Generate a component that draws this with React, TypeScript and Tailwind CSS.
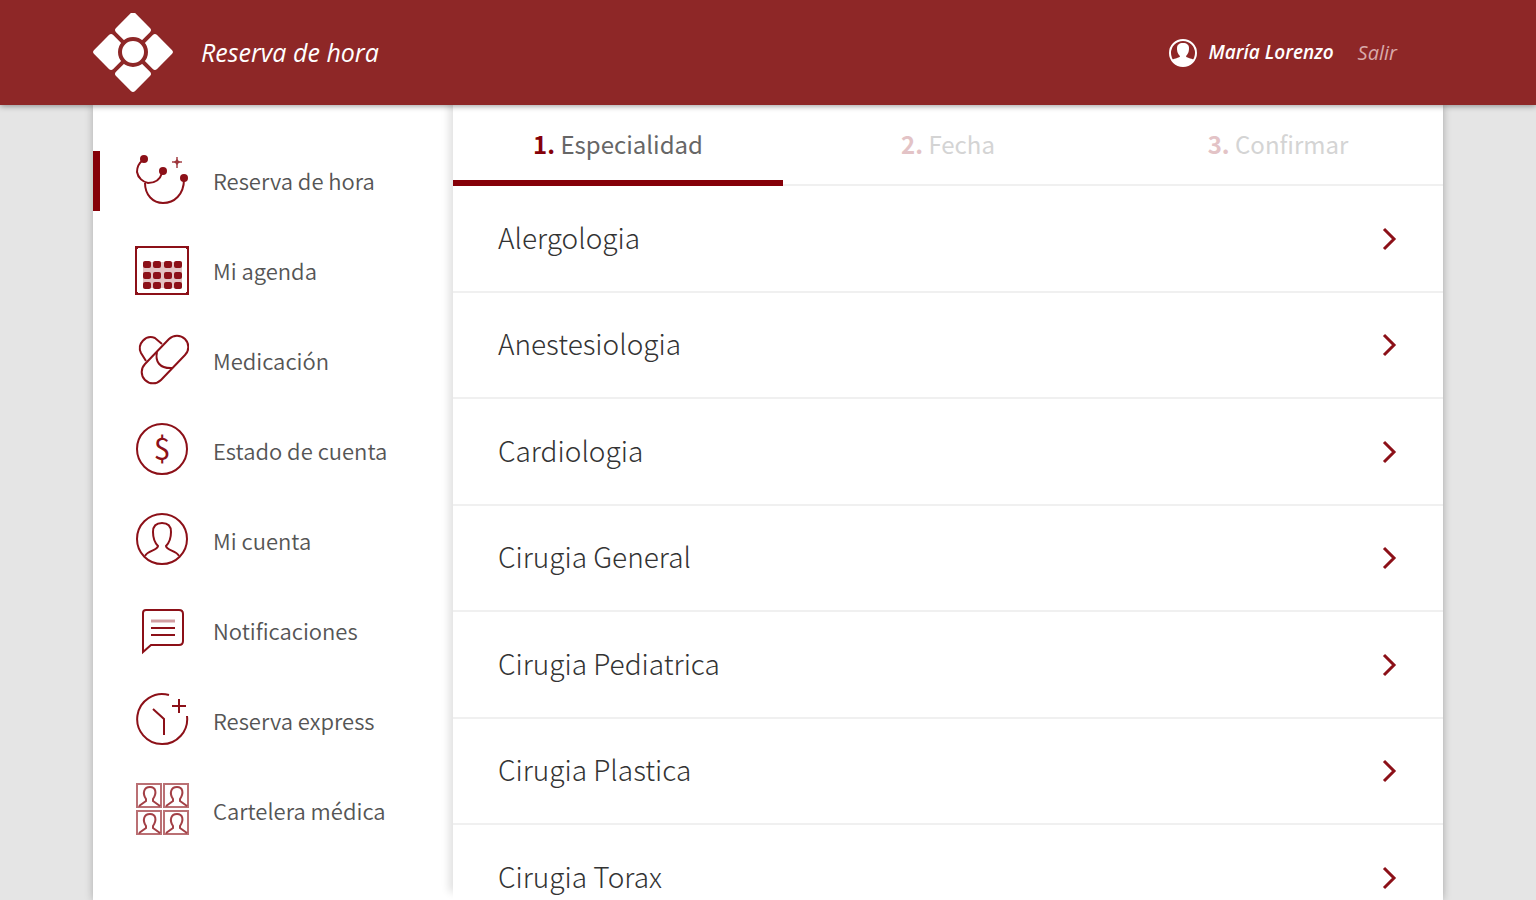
import { useState, type ReactNode } from 'react';
import { clsx } from 'clsx';

const Stethoscope = () => (
  <>
    <path d="M8 9C4 12 2 16 2 21C3 27 8 31 13 32C20 32 25 29 27 22" />
    <path d="M10 32C10 44 18 52 28 52C39 52 49 44 49 28" />
    <g fill="currentColor" stroke="none">
      <circle cx="9" cy="8" r="4" />
      <circle cx="28" cy="20" r="4" />
      <circle cx="49" cy="27" r="4" />
    </g>
    <path d="M42 6V17M37 11H47" strokeOpacity="0.6" />
    <path d="M42 8L45 11L42 14L39 11Z" fill="currentColor" stroke="none" opacity="0.6" />
  </>
);

const Calendar = () => (
  <>
    <rect x="1" y="6" width="52" height="47" />
    <rect x="8" y="21" width="39" height="26" fill="#e3c3c3" stroke="none" />
    <g fill="currentColor" stroke="none">
      {[20, 31, 41].map((y) =>
        [8, 18, 29, 39].map((x) => (
          <rect key={`${x}-${y}`} x={x} y={y} width="8" height="7" rx="2" />
        ))
      )}
      {[5, 51].map((y) =>
        [0, 51].map((x) => <rect key={`${x}-${y}`} x={x} y={y} width="3" height="3" />)
      )}
    </g>
  </>
);

const Pills = () => (
  <>
    <path d="M11 30L6 22A11 11 0 0 1 20 7L27 13" />
    <path d="M34 8A11 11 0 0 1 50 24L26 49A11 11 0 0 1 10 33Z" />
    <path d="M22 21C20 30 24 38 38 37" />
  </>
);

const Dollar = () => (
  <>
    <circle cx="27" cy="28" r="25" />
    <text
      x="27"
      y="39"
      textAnchor="middle"
      fill="currentColor"
      stroke="none"
      className="text-[30px] font-normal"
    >
      $
    </text>
  </>
);

const Person = () => (
  <>
    <circle cx="27" cy="28" r="25" />
    <path d="M10 45C13 39 22 40 23 35C19 31 18 27 18 21C18 15 21 12 27 12C33 12 36 15 36 21C36 27 35 31 31 35C32 40 41 39 44 45" />
  </>
);

const Message = () => (
  <>
    <path d="M8 51V12Q8 9 11 9H44Q48 9 48 13V40Q48 44 44 44H16Z" />
    <path d="M16 20H40" strokeWidth="3" strokeOpacity="0.4" />
    <path d="M16 27H40M16 34H40" />
  </>
);

const Clock = () => (
  <>
    <path d="M34 4A25 25 0 1 0 52 25" />
    <path d="M18 18L29 28V44M44 8V22M37 15H51" />
  </>
);

const Board = () => (
  <>
    {[3, 30].map((y) =>
      [2, 29].map((x) => (
        <g key={`${x}-${y}`} transform={`translate(${x} ${y})`}>
          <rect width="24" height="23" strokeOpacity="0.6" />
          <path d="M2 22L9 17V15C5 9 7 3 13 3C19 3 20 9 16 15V17L23 22" strokeOpacity="0.8" />
        </g>
      ))
    )}
  </>
);

const menu: { name: string; icon: () => ReactNode }[] = [
  { name: 'Reserva de hora', icon: Stethoscope },
  { name: 'Mi agenda', icon: Calendar },
  { name: 'Medicación', icon: Pills },
  { name: 'Estado de cuenta', icon: Dollar },
  { name: 'Mi cuenta', icon: Person },
  { name: 'Notificaciones', icon: Message },
  { name: 'Reserva express', icon: Clock },
  { name: 'Cartelera médica', icon: Board },
];

const steps = ['Especialidad', 'Fecha', 'Confirmar'];

const specialties = [
  'Alergologia',
  'Anestesiologia',
  'Cardiologia',
  'Cirugia General',
  'Cirugia Pediatrica',
  'Cirugia Plastica',
  'Cirugia Torax',
];

function Logo() {
  return (
    <svg viewBox="0 0 80 80" className="h-20 w-20" aria-hidden="true">
      <g transform="translate(40 39) rotate(45)" fill="#fff">
        <rect x="-29" y="-29" width="27" height="27" rx="3" />
        <rect x="2" y="-29" width="27" height="27" rx="3" />
        <rect x="-29" y="2" width="27" height="27" rx="3" />
        <rect x="2" y="2" width="27" height="27" rx="3" />
      </g>
      <circle cx="40" cy="39" r="13" fill="#fff" stroke="#8e2727" strokeWidth="4" />
    </svg>
  );
}

function Avatar() {
  return (
    <svg viewBox="0 0 30 30" className="h-[30px] w-[30px]" fill="none" aria-hidden="true">
      <circle cx="15" cy="15" r="13" stroke="#fff" strokeWidth="2" />
      <path
        d="M4 22C7 20 12 20 12 18C9 15 9 12 9 10C9 7 11 5 15 5C19 5 21 7 21 10C21 12 21 15 18 18C18 20 23 20 26 22C23 27 19 28 15 28C11 28 7 27 4 22Z"
        fill="#fff"
      />
    </svg>
  );
}

export default function App() {
  const [active, setActive] = useState('Reserva de hora');
  const [step, setStep] = useState(0);

  return (
    <div className="flex h-screen flex-col bg-[#e5e5e5] font-['Noto_Sans_CJK_SC','Source_Sans_Pro',sans-serif]">
      {/* Top bar */}
      <header className="z-20 bg-[#8e2727] font-['Open_Sans',sans-serif] italic text-white shadow-[0_1px_6px_rgba(0,0,0,0.4)]">
        <div className="mx-auto flex h-[105px] max-w-[1350px] items-center pr-[46px]">
          <Logo />
          <h1 className="ml-7 text-[25px]">Reserva de hora</h1>
          <div className="ml-auto flex items-center gap-6 text-xl">
            <a href="#perfil" className="flex items-center gap-[10px] text-[19px] font-semibold">
              <Avatar />
              María Lorenzo
            </a>
            <a href="#salir" className="text-[#d9a9a9]">
              Salir
            </a>
          </div>
        </div>
      </header>

      <div className="mx-auto flex min-h-0 w-full max-w-[1350px] flex-1 bg-white shadow-[0_0_8px_rgba(0,0,0,0.25)]">
        {/* Sidebar */}
        <nav className="flex w-[360px] shrink-0 flex-col gap-[30px] pt-[46px]">
          {menu.map((item) => (
            <a
              key={item.name}
              href="#"
              onClick={() => setActive(item.name)}
              className={clsx(
                'flex h-[60px] items-center gap-6 border-l-[7px] pl-[35px] text-[22px] font-[350] text-[#555]',
                active === item.name ? 'border-[#850008]' : 'border-transparent'
              )}
            >
              <svg
                viewBox="0 0 54 60"
                className="h-[60px] w-[54px] text-[#8c1018]"
                fill="none"
                stroke="currentColor"
                strokeWidth="2"
                aria-hidden="true"
              >
                <item.icon />
              </svg>
              <span className="pb-0.5">{item.name}</span>
            </a>
          ))}
        </nav>

        {/* Booking steps */}
        <main className="z-10 flex min-w-0 flex-1 flex-col shadow-[-4px_-8px_8px_rgba(0,0,0,0.12)]">
          <div className="grid h-[81px] shrink-0 grid-cols-3 border-b-2 border-[#f0f0f0]">
            {steps.map((name, i) => (
              <button
                key={name}
                type="button"
                onClick={() => setStep(i)}
                className={clsx(
                  '-mb-[2px] border-b-[6px] border-t-2 border-t-transparent text-2xl',
                  step === i
                    ? 'border-b-[#850008] text-[#666]'
                    : 'border-b-transparent text-[#d4d4d4]'
                )}
              >
                <span className={clsx('font-bold', step === i ? 'text-[#850008]' : 'text-[#e3c3c6]')}>
                  {i + 1}.
                </span>{' '}
                {name}
              </button>
            ))}
          </div>

          <ul className="min-h-0 flex-1 overflow-y-auto bg-white [scrollbar-width:none]">
            {specialties.map((name) => (
              <li key={name} className="h-[107px] border-b-2 border-[#f0f0f0] even:h-[106px]">
                <button
                  type="button"
                  className="flex h-full w-full items-center justify-between pl-[45px] pr-[46px] text-[28px] font-light text-[#333]"
                >
                  <span className="pb-1">{name}</span>
                  <svg
                    viewBox="0 0 16 24"
                    className="h-6 w-4"
                    fill="none"
                    stroke="#8c1018"
                    strokeWidth="3"
                    aria-hidden="true"
                  >
                    <path d="M3 2L13 12L3 22" />
                  </svg>
                </button>
              </li>
            ))}
          </ul>
        </main>
      </div>
    </div>
  );
}
